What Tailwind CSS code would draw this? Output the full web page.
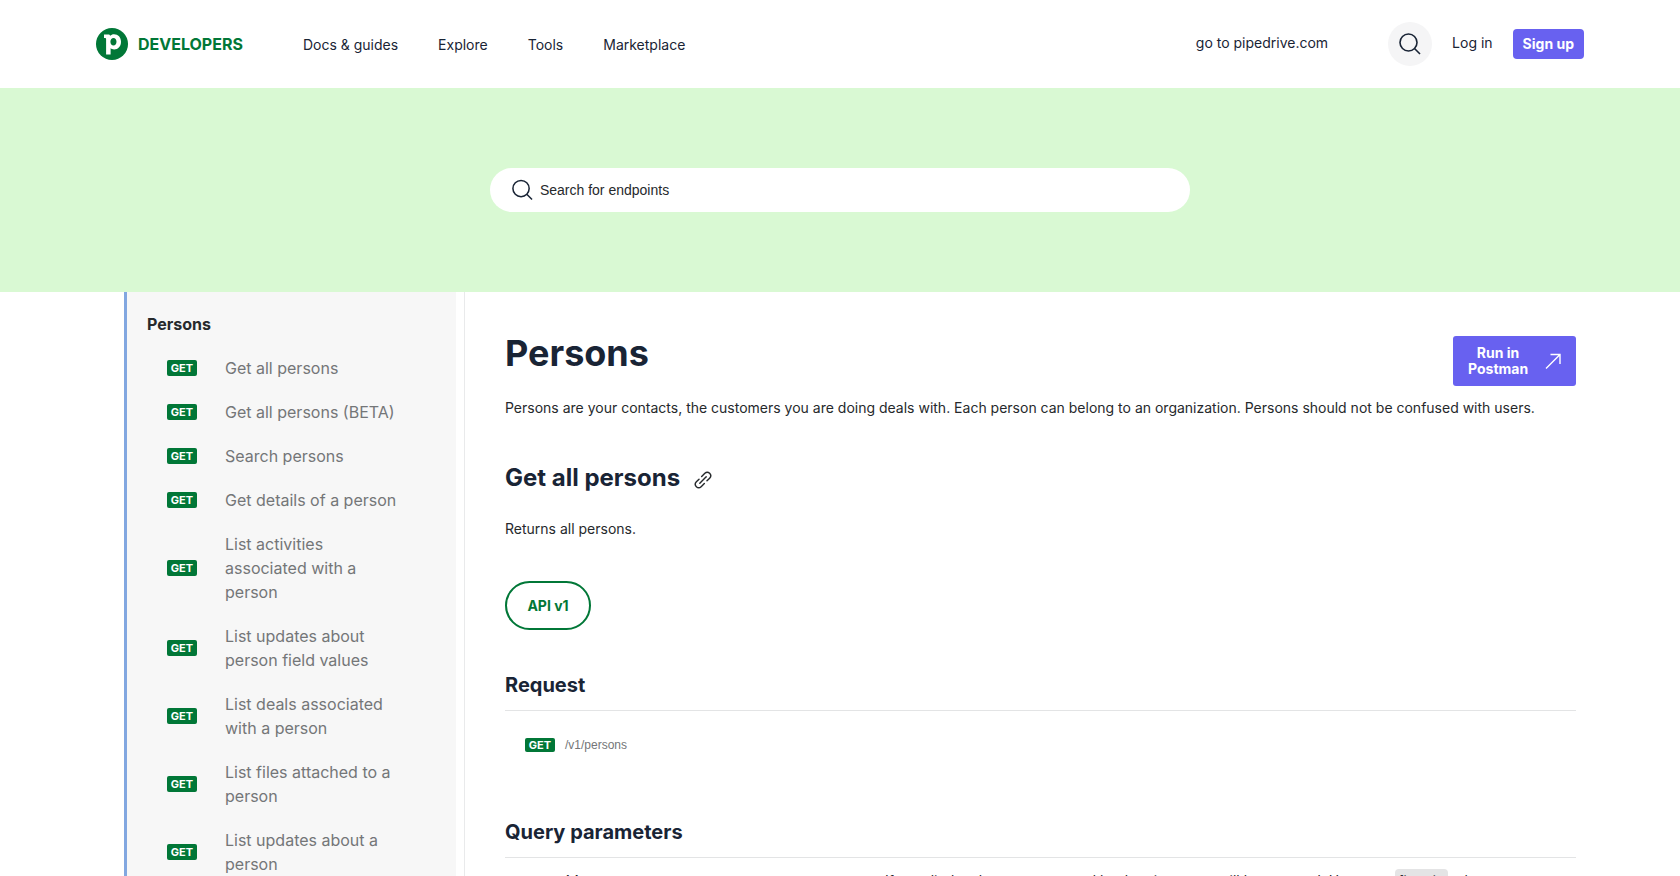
<!DOCTYPE html>
<html lang="en">
<head>
    <meta charset="UTF-8">
    <meta name="viewport" content="width=device-width, initial-scale=1.0">
    <title>Persons - Pipedrive Developers</title>
    <script src="https://cdn.jsdelivr.net/npm/@tailwindcss/browser@4"></script>
</head>
<body class="min-h-screen bg-white font-['Inter',sans-serif] text-sm text-[#26292c]">
    <header class="flex h-[88px] items-center px-24 text-[#192435]">
        <a href="#" class="flex items-center gap-[10px] text-base font-bold text-[#017737]">
            <svg class="size-8" viewBox="0 0 32 32" aria-hidden="true">
                <circle cx="16" cy="16" r="16" fill="#017737"/>
                <path fill="#fff" fill-rule="evenodd" d="M8 6.500h4.200c1.200 0 1.700.5 1.900 1.300 1-1 2.300-1.600 3.900-1.600 4.100 0 7 3.100 7 7.600 0 4.600-2.900 7.700-6.900 7.700-1.500 0-2.700-.5-3.500-1.200v6.200H10.100V11c0-.6-.3-.9-.9-.9H8zM17.500 10c-1.700 0-3.100 1.300-3.100 3.800 0 2.300 1.300 3.800 3.100 3.800 1.700 0 3-1.400 3-3.800 0-2.500-1.300-3.800-3-3.800z"/>
            </svg>
            DEVELOPERS
        </a>
        <nav class="ml-[60px] flex gap-10 pt-px">
            <a href="#">Docs &amp; guides</a>
            <a href="#">Explore</a>
            <a href="#">Tools</a>
            <a href="#">Marketplace</a>
        </nav>
        <div class="ml-auto flex items-center">
            <a href="#" class="mr-[60px] pb-0.5">go to pipedrive.com</a>
            <button type="button" aria-label="Search" class="flex size-11 items-center justify-center rounded-full bg-[#f5f5f6]">
                <svg class="size-6" viewBox="0 0 24 24" fill="none" stroke="#192435" stroke-width="1.600" aria-hidden="true">
                    <circle cx="10.500" cy="10.500" r="8.500"/>
                    <path d="M16.500 16.500 22 22"/>
                </svg>
            </button>
            <a href="#" class="mx-5 pb-0.5">Log in</a>
            <a href="#" class="rounded-sm bg-[#6861f0] px-[10px] py-[5px] font-bold text-white">Sign up</a>
        </div>
    </header>

    <section class="bg-[#d9f9d3] py-20">
        <label class="mx-auto flex h-11 max-w-[700px] items-center gap-1.5 rounded-full bg-white px-[21px]">
            <svg class="size-6" viewBox="0 0 24 24" fill="none" stroke="#192435" stroke-width="1.600" aria-hidden="true">
                <circle cx="10.500" cy="10.500" r="8.500"/>
                <path d="M16.500 16.500 22 22"/>
            </svg>
            <input type="text" aria-label="Search for endpoints" placeholder="Search for endpoints" class="w-full font-['Liberation_Sans',sans-serif] outline-none placeholder:text-[#26292c]">
        </label>
    </section>

    <div class="flex pl-[124px] pr-[104px]">
        <aside class="w-[341px] shrink-0 border-r border-[#e9eaeb] pr-2">
            <div class="h-full border-l-[3px] border-[#82a7e0] bg-[#f7f7f7] py-[10px] pl-5 text-base text-[#747678]">
                <h2 class="py-[10px] font-bold text-[#26292c]">Persons</h2>
                <ul class="pl-5">
                    <li><a href="#" class="flex items-center gap-7 py-[10px]"><span class="w-[30px] shrink-0 rounded-xs bg-[#017737] text-center text-[11px] leading-4 font-bold text-white">GET</span><span class="w-[180px]">Get all persons</span></a></li>
                    <li><a href="#" class="flex items-center gap-7 py-[10px]"><span class="w-[30px] shrink-0 rounded-xs bg-[#017737] text-center text-[11px] leading-4 font-bold text-white">GET</span><span class="w-[180px]">Get all persons (BETA)</span></a></li>
                    <li><a href="#" class="flex items-center gap-7 py-[10px]"><span class="w-[30px] shrink-0 rounded-xs bg-[#017737] text-center text-[11px] leading-4 font-bold text-white">GET</span><span class="w-[180px]">Search persons</span></a></li>
                    <li><a href="#" class="flex items-center gap-7 py-[10px]"><span class="w-[30px] shrink-0 rounded-xs bg-[#017737] text-center text-[11px] leading-4 font-bold text-white">GET</span><span class="w-[180px]">Get details of a person</span></a></li>
                    <li><a href="#" class="flex items-center gap-7 py-[10px]"><span class="w-[30px] shrink-0 rounded-xs bg-[#017737] text-center text-[11px] leading-4 font-bold text-white">GET</span><span class="w-[180px]">List activities associated with a person</span></a></li>
                    <li><a href="#" class="flex items-center gap-7 py-[10px]"><span class="w-[30px] shrink-0 rounded-xs bg-[#017737] text-center text-[11px] leading-4 font-bold text-white">GET</span><span class="w-[180px]">List updates about person field values</span></a></li>
                    <li><a href="#" class="flex items-center gap-7 py-[10px]"><span class="w-[30px] shrink-0 rounded-xs bg-[#017737] text-center text-[11px] leading-4 font-bold text-white">GET</span><span class="w-[180px]">List deals associated with a person</span></a></li>
                    <li><a href="#" class="flex items-center gap-7 py-[10px]"><span class="w-[30px] shrink-0 rounded-xs bg-[#017737] text-center text-[11px] leading-4 font-bold text-white">GET</span><span class="w-[180px]">List files attached to a person</span></a></li>
                    <li><a href="#" class="flex items-center gap-7 py-[10px]"><span class="w-[30px] shrink-0 rounded-xs bg-[#017737] text-center text-[11px] leading-4 font-bold text-white">GET</span><span class="w-[180px]">List updates about a person</span></a></li>
                </ul>
            </div>
        </aside>

        <main class="min-w-0 flex-1 pl-10 pt-9">
            <div class="flex items-start justify-between">
                <h1 class="pt-px text-4xl leading-[48px] font-bold text-[#192435]">Persons</h1>
                <a href="#" class="mt-2 flex h-[50px] w-[123px] items-center justify-between rounded-[3px] bg-[#6861f0] pr-[13px] pl-[15px] text-center leading-4 font-bold text-white">
                    <span>Run in<br>Postman</span>
                    <svg class="size-5" viewBox="0 0 20 20" fill="none" stroke="#fff" stroke-width="1.400" aria-hidden="true">
                        <path d="M3 17.500 17 3.500M7.500 3.500H17V13"/>
                    </svg>
                </a>
            </div>
            <p class="pt-[10px] leading-6">Persons are your contacts, the customers you are doing deals with. Each person can belong to an organization. Persons should not be confused with users.</p>

            <div class="mt-[42px] flex items-center gap-[14px]">
                <h2 class="text-2xl font-bold text-[#192435]">Get all persons</h2>
                <a href="#" aria-label="Link to Get all persons" class="pt-1">
                    <svg class="size-[18px]" viewBox="0 0 24 24" fill="none" stroke="#26292c" stroke-width="1.900" stroke-linecap="round" aria-hidden="true">
                        <g transform="rotate(-45 12 12)">
                            <path d="M10 16.500H4a4.500 4.500 0 0 1 0-9h5"/>
                            <path d="M14 7.500h6a4.500 4.500 0 0 1 0 9h-5"/>
                            <path d="M6 12h12"/>
                        </g>
                    </svg>
                </a>
            </div>
            <p class="mt-[23px] leading-6">Returns all persons.</p>
            <button type="button" class="mt-10 block h-[49px] w-[86px] rounded-full border-2 border-[#017737] font-bold text-[#017737]">API v1</button>

            <h3 class="mt-10 border-b border-[#e3e4e5] pb-[10px] text-xl leading-[30px] font-bold text-[#192435]">Request</h3>
            <div class="mt-[26px] flex items-center gap-[10px] pl-5">
                <span class="w-[30px] rounded-xs bg-[#017737] text-center text-[11px] leading-[14px] font-bold text-white">GET</span>
                <span class="font-['Liberation_Sans',sans-serif] text-xs text-[#747678]">/v1/persons</span>
            </div>

            <h3 class="mt-16 border-b border-[#e3e4e5] pb-[10px] text-xl leading-[30px] font-bold text-[#192435]">Query parameters</h3>
            <dl class="flex px-5 py-[11px] leading-6">
                <dt class="w-[360px] shrink-0 pl-1 font-semibold">user_id<br><span class="font-normal text-[#747678]">integer</span></dt>
                <dd>If supplied, only persons owned by the given user will be returned. However, <code class="rounded-sm bg-[#e4e4e5] px-1 py-1 font-['Inter',sans-serif] text-[13px]">filter_id</code> takes precedence over <code class="rounded-sm bg-[#e4e4e5] px-1 py-1 font-['Inter',sans-serif] text-[13px]">user_id</code> when both are supplied.</dd>
            </dl>
        </main>
    </div>
</body>
</html>
